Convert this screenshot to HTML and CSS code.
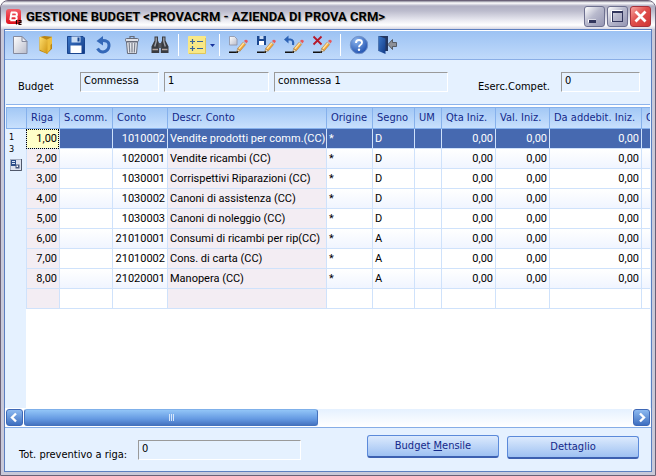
FILE: index.html
```html
<!DOCTYPE html>
<html lang="it">
<head>
<meta charset="utf-8">
<title>Gestione Budget</title>
<link rel="stylesheet" href="styles.css">
</head>
<body>
<main class="window">
  <header class="titlebar">
    <svg class="logo" viewBox="0 0 16 16" aria-hidden="true">
      <defs><linearGradient id="gRed" x1="0" y1="0" x2="0" y2="1"><stop offset="0" stop-color="#f4606a"/><stop offset="1" stop-color="#e0101c"/></linearGradient></defs>
      <rect width="15" height="15" rx="3" fill="url(#gRed)"/>
      <path d="M5 3.500h4a1.900 1.900 0 0 1 0 3.800h-4.500M4.300 11.200h4.200a1.950 1.950 0 0 0 .5-3.900M5.500 3.500L4.300 11.200" fill="none" stroke="#fff" stroke-width="2"/>
      <path d="M10.500 11v4.500M12.500 11.500h2.500v1.800h-2v2h2.500" fill="none" stroke="#200" stroke-width="1.200"/>
    </svg>
    <h1>GESTIONE BUDGET &lt;PROVACRM - AZIENDA DI PROVA CRM&gt;</h1>
    <div class="winbuttons">
      <button type="button" class="win" aria-label="Riduci a icona"><svg viewBox="0 0 19 19"><path d="M3 12.500h8v3H3z" fill="#fff"/><path d="M4 13h7v3H4z" fill="#32365c"/></svg></button>
      <button type="button" class="win" aria-label="Ingrandisci"><svg viewBox="0 0 19 19"><path d="M3.500 15V3.500H14" stroke="#fff" fill="none"/><rect x="4.500" y="4.500" width="10" height="10" fill="none" stroke="#32365c"/><path d="M4 5h11" stroke="#32365c" stroke-width="2"/></svg></button>
      <button type="button" class="win close" aria-label="Chiudi"><svg viewBox="0 0 19 19"><path d="M4.500 4.500l10 10M14.500 4.500l-10 10" stroke="#fff" stroke-width="2.800"/></svg></button>
    </div>
  </header>

  <section class="client">
    <nav class="toolbar" aria-label="Comandi">
      <svg class="defs" aria-hidden="true">
        <defs>
          <linearGradient id="gPage" x1="0" y1="0" x2="1" y2="1"><stop offset="0" stop-color="#fff"/><stop offset="1" stop-color="#b9bccb"/></linearGradient>
          <linearGradient id="gBlue" x1="0" y1="0" x2="1" y2="1"><stop offset="0" stop-color="#3c78c8"/><stop offset="1" stop-color="#123a86"/></linearGradient>
          <linearGradient id="gGold" x1="0" y1="0" x2="1" y2="1"><stop offset="0" stop-color="#ffe070"/><stop offset="1" stop-color="#cf9410"/></linearGradient>
          <radialGradient id="gHelp" cx=".35" cy=".25" r=".8"><stop offset="0" stop-color="#8db6ee"/><stop offset="1" stop-color="#1d4fae"/></radialGradient>
          <g id="pencil">
            <path d="M1 17.300h9" stroke="#111" stroke-width="1.400"/>
            <path d="M8.500 17.500l1.200-4 2.600 2.200z" fill="#f6dcae" stroke="#6b4a1a" stroke-width=".4"/>
            <path d="M8.500 17.500l.6-1.700 1.200 1z" fill="#111"/>
            <path d="M9.700 13.500l5.300-6.200 2.700 2.200-5.300 6.200z" fill="#f5a83a" stroke="#96601c" stroke-width=".4"/>
            <path d="M10.900 13.700l5-5.800" stroke="#ffe2a0" stroke-width="1.400"/>
            <path d="M15 7.300l1-1.200 2.700 2.200-1 1.200z" fill="#b9bcc6"/>
            <path d="M16 6.100l1-1.200q2-.7 2.900 1.300l-1.200 2.100z" fill="#e8595d"/>
          </g>
        </defs>
      </svg>
      <button type="button" class="tool" aria-label="Nuovo"><svg viewBox="0 0 20 20"><path d="M3.500 1.500h8.500l5 5v12h-13.500z" fill="url(#gPage)" stroke="#858a9e"/><path d="M12 1.500v5h5z" fill="#e9ebf3" stroke="#858a9e"/></svg></button>
      <button type="button" class="tool" aria-label="Apri"><svg viewBox="0 0 20 20"><path d="M1.500 2l5-1 7.500.8v12l-5 5-7.500-3z" fill="#b98410"/><path d="M9 4.500l5-2.500v6.500l-1.500 1.500v4l-3.500 4.500z" fill="#eebf3d"/><path d="M1.500 1.500l8 3.500v14l-8-4.500z" fill="url(#gGold)"/></svg></button>
      <button type="button" class="tool" aria-label="Salva"><svg viewBox="0 0 20 20"><path d="M1.500 1.500h15.500l1.500 1.500v15.500h-17z" fill="url(#gBlue)" stroke="#1a458f"/><path d="M5.500 1.500h9v6h-9z" fill="#c9dcf4"/><path d="M11.500 2.500h2v4h-2z" fill="#17458f"/><path d="M4.500 10.500h11v7.500h-11z" fill="#fff"/></svg></button>
      <button type="button" class="tool" aria-label="Annulla"><svg viewBox="0 0 20 20"><path d="M7.500 5.500q8-.5 7.500 5.500-.7 5.500-6 6-3.500 0-5.500-3.500" fill="none" stroke="#3468b8" stroke-width="3"/><path d="M2.500 6l6.500-5v9.500z" fill="#3468b8"/></svg></button>
      <button type="button" class="tool" aria-label="Elimina"><svg viewBox="0 0 20 20"><path d="M8 3.500v-2h4v2" fill="none" stroke="#666b79" stroke-width="1.200"/><rect x="3.500" y="3.500" width="13" height="3" rx="1" fill="#dfe1e8" stroke="#666b79"/><path d="M4.500 7h11l-1 11.500h-9z" fill="#e5e7ec" stroke="#666b79"/><path d="M7.200 8l.5 9.500M10 8v9.500M12.800 8l-.5 9.500" stroke="#7b808d" stroke-width="1.200"/></svg></button>
      <button type="button" class="tool" aria-label="Cerca"><svg viewBox="0 0 20 20"><path d="M4.500 1.500h3.500v4l1.200 3v9.500h-7.700v-6.500l3-6zM12 1.500h3.500v4l3 6v6.500h-7.700v-9.500l1.200-3z" fill="#393b40"/><path d="M8.500 8h3v5h-3z" fill="#55575d"/><path d="M6.200 2.500v4l-1.500 5M13.800 2.500v4l1.500 5" stroke="#9da0a8" stroke-width="1.400" fill="none"/><path d="M2.500 14.500h5.500M12 14.500h5.500" stroke="#b5a39b" stroke-width="1.400"/></svg></button>
      <span class="sep"></span>
      <button type="button" class="tool drop" aria-label="Operazioni"><svg viewBox="0 0 20 20"><rect x="1" y="1" width="18" height="18" rx="1" fill="#f8e886"/><path d="M2 18.500h16.500V3" fill="none" stroke="#e0c65a"/><path d="M3 6.500h5M5.500 4v5M3 13.500h5M5.500 11v5M10 6.500h6M10 13.500h6" stroke="#38659c" stroke-width="1.200"/></svg><svg class="caret" viewBox="0 0 5 3"><path d="M0 0h5l-2.500 3z" fill="#16329c"/></svg></button>
      <span class="sep"></span>
      <button type="button" class="tool" aria-label="Nuova riga"><svg viewBox="0 0 20 20"><path d="M1.500 1.500h5l2.500 2.500v6h-7.500z" fill="url(#gPage)" stroke="#8b90a3" stroke-width=".8"/><use href="#pencil"/></svg></button>
      <button type="button" class="tool" aria-label="Salva riga"><svg viewBox="0 0 20 20"><path d="M1 1h9v9h-9z" fill="#1c4890"/><path d="M3.500 1h4v3h-4z" fill="#c9dcf4"/><path d="M3 6h5v4h-5z" fill="#fff"/><use href="#pencil"/></svg></button>
      <button type="button" class="tool" aria-label="Annulla riga"><svg viewBox="0 0 20 20"><path d="M4 4.500h2.500q3.500.5 2.500 5.500" fill="none" stroke="#2d63b5" stroke-width="2.200"/><path d="M0 4.500l4.500-4v8z" fill="#2d63b5"/><use href="#pencil"/></svg></button>
      <button type="button" class="tool" aria-label="Elimina riga"><svg viewBox="0 0 20 20"><path d="M1.500 1.500l8 8M9.500 1.500l-8 8" stroke="#b5182a" stroke-width="1.800"/><use href="#pencil"/></svg></button>
      <span class="sep"></span>
      <button type="button" class="tool" aria-label="Aiuto"><svg viewBox="0 0 20 20"><circle cx="10" cy="10" r="8.700" fill="url(#gHelp)" stroke="#7392c8"/><path d="M7 8q0-3 3-3t3 2.500q0 1.500-1.700 2.500-1.300.8-1.300 2.300" fill="none" stroke="#fff" stroke-width="1.900"/><circle cx="10" cy="14.700" r="1.200" fill="#fff"/></svg></button>
      <button type="button" class="tool" aria-label="Esci"><svg viewBox="0 0 20 20"><path d="M1.500 1h9.500v15h-9.500z" fill="#23365f"/><path d="M1.500 1l7 2.500v15.500l-7-3z" fill="url(#gBlue)"/><path d="M19.500 7.500h-4v-3l-4.500 5 4.500 5v-3h4z" fill="#8d9097" stroke="#44474e" stroke-width=".8"/></svg></button>
    </nav>

    <form class="head">
      <label for="bud">Budget</label>
      <input id="bud" class="f1" value="Commessa">
      <input class="f2" value="1" aria-label="Codice">
      <input class="f3" value="commessa 1" aria-label="Descrizione">
      <label for="ese" class="ese">Eserc.Compet.</label>
      <input id="ese" class="f4" value="0">
    </form>

    <div class="gridbox">
      <aside class="gutter">
        <div class="corner"></div>
        <span>1</span><span>3</span>
        <svg viewBox="0 0 12 12" aria-hidden="true"><rect x=".5" y=".5" width="11" height="11" fill="#dde2ee" stroke="#a5aec0"/><path d="M1 1h5v6h-5z" fill="#2c4e88"/><path d="M2 2.500h3M2 4.500h3" stroke="#dbe6f7"/><path d="M5.500 5.500h4v4h-4z" fill="#48597d"/><path d="M6.500 6.500h1.500v1.500h-1.500z" fill="#fff"/><path d="M11.500 0v11.500H0" fill="none" stroke="#50586b"/></svg>
      </aside>
      <div class="scroller">
        <table>
          <colgroup><col class="c1"><col class="c2"><col class="c3"><col class="c4"><col class="c5"><col class="c6"><col class="c7"><col class="c8"><col class="c8"><col class="c10"><col class="c11"></colgroup>
          <thead><tr><th>Riga</th><th>S.comm.</th><th>Conto</th><th>Descr. Conto</th><th>Origine</th><th>Segno</th><th>UM</th><th>Qta Iniz.</th><th>Val. Iniz.</th><th>Da addebit. Iniz.</th><th>Q</th></tr></thead>
          <tbody>
            <tr class="sel"><td>1,00</td><td></td><td>1010002</td><td>Vendite prodotti per comm.(CC)</td><td>*</td><td>D</td><td></td><td>0,00</td><td>0,00</td><td>0,00</td><td></td></tr>
            <tr><td>2,00</td><td></td><td>1020001</td><td>Vendite ricambi (CC)</td><td>*</td><td>D</td><td></td><td>0,00</td><td>0,00</td><td>0,00</td><td></td></tr>
            <tr><td>3,00</td><td></td><td>1030001</td><td>Corrispettivi Riparazioni (CC)</td><td>*</td><td>D</td><td></td><td>0,00</td><td>0,00</td><td>0,00</td><td></td></tr>
            <tr><td>4,00</td><td></td><td>1030002</td><td>Canoni di assistenza (CC)</td><td>*</td><td>D</td><td></td><td>0,00</td><td>0,00</td><td>0,00</td><td></td></tr>
            <tr><td>5,00</td><td></td><td>1030003</td><td>Canoni di noleggio (CC)</td><td>*</td><td>D</td><td></td><td>0,00</td><td>0,00</td><td>0,00</td><td></td></tr>
            <tr><td>6,00</td><td></td><td>21010001</td><td>Consumi di ricambi per rip(CC)</td><td>*</td><td>A</td><td></td><td>0,00</td><td>0,00</td><td>0,00</td><td></td></tr>
            <tr><td>7,00</td><td></td><td>21010002</td><td>Cons. di carta (CC)</td><td>*</td><td>A</td><td></td><td>0,00</td><td>0,00</td><td>0,00</td><td></td></tr>
            <tr><td>8,00</td><td></td><td>21020001</td><td>Manopera (CC)</td><td>*</td><td>A</td><td></td><td>0,00</td><td>0,00</td><td>0,00</td><td></td></tr>
            <tr><td></td><td></td><td></td><td></td><td></td><td></td><td></td><td></td><td></td><td></td><td></td></tr>
          </tbody>
        </table>
      </div>
    </div>

    <div class="hscroll">
      <button type="button" aria-label="Scorri a sinistra"><svg viewBox="0 0 15 15"><path d="M9 3.500l-4 4 4 4" fill="none" stroke="#fff" stroke-width="2.400"/></svg></button>
      <div class="track"><div class="thumb"><i></i><i></i><i></i></div></div>
      <button type="button" aria-label="Scorri a destra"><svg viewBox="0 0 15 15"><path d="M6 3.500l4 4-4 4" fill="none" stroke="#fff" stroke-width="2.400"/></svg></button>
    </div>

    <footer class="foot">
      <label for="tot">Tot. preventivo a riga:</label>
      <input id="tot" value="0">
      <div class="actions">
        <button type="button">Budget <u>M</u>ensile</button>
        <button type="button">Dettaglio</button>
      </div>
    </footer>
  </section>
</main>
</body>
</html>
```
FILE: styles.css
```css
* { box-sizing: border-box; }
html, body { height: 100%; margin: 0; }
body { background: #fff; font: 11px/14px "DejaVu Sans Condensed", "Noto Sans", sans-serif; color: #000; }
button, input { font: inherit; color: inherit; margin: 0; }
svg { display: block; }

.window {
  display: flex; flex-direction: column; height: 100vh; padding: 0 3px 3px;
  background: #c9c9d9; border: 1px solid #6a6177; border-radius: 8px 8px 0 0; overflow: hidden;
}
.titlebar {
  display: flex; align-items: center; gap: 4px; height: 28px; flex: none;
  margin: 0 -3px; padding: 3px 4px 0 5px;
  background: linear-gradient(#8a8798 0, #fff 2px, #b0afc3 5px, #bcbccd 10px, #e8e8f0 19px, #fff 24px, #d5d5e2 28px);
}
.logo { width: 16px; height: 16px; }
h1 { flex: 1; margin: 0; font: bold 13px/18px Roboto, sans-serif; white-space: nowrap; text-shadow: 1px 1px 1px #aaa; }
.winbuttons { display: flex; gap: 2px; }
.win { width: 21px; height: 21px; padding: 0; border: 1px solid #6e708f; border-radius: 3px; background: linear-gradient(135deg, #fff, #b9bacd 45%, #9596b3); }
.win svg { width: 19px; height: 19px; }
.close { border-color: #a5323c; background: linear-gradient(135deg, #f6a49f, #e0504d 45%, #cf3535); }

.client { flex: 1; min-height: 0; display: flex; flex-direction: column; border: 1px solid #5c7fc0; background: #e5f1ff; }
.toolbar { display: flex; align-items: center; height: 30px; flex: none; padding: 0 5px; border-top: 1px solid #fff; border-bottom: 1px solid #8aaee6; background: linear-gradient(#9cc2f3, #c0dafb); }
.defs { position: absolute; width: 0; height: 0; }
.tool { width: 28px; height: 24px; padding: 0; border: 0; background: none; display: flex; align-items: center; }
.tool > svg:first-child { width: 20px; height: 20px; flex: none; }
.drop { width: 32px; gap: 3px; }
.tool > .caret { width: 5px; height: 3px; }
.sep { width: 1px; height: 22px; margin: 0 8px 0 0; background: #fff; }

.head { display: flex; align-items: flex-start; height: 44px; flex: none; padding: 12px 11px 0 13px; }
label { padding-top: 8px; white-space: nowrap; }
input { height: 20px; padding: 0 3px 3px; border: 1px solid; border-color: #9a9a9a #fff #fff #9a9a9a; background: transparent; min-width: 0; border-radius: 0; }
.head label:first-child { width: 62px; }
.f1 { width: 79px; } .f2 { width: 105px; margin-left: 5px; } .f3 { width: 174px; margin-left: 5px; }
.ese { margin-left: auto; padding-right: 11px; } .f4 { width: 79px; }

.gridbox { flex: 1; min-height: 0; display: flex; margin: 0 1px; border-top: 1px solid #8db4ec; padding-top: 2px; background: #fff; }
.gutter { width: 20px; flex: none; display: flex; flex-direction: column; background: #e5f1ff; font-size: 9px; line-height: 12px; }
.gutter span { padding-left: 3px; }
.gutter svg { width: 12px; height: 12px; margin: 4px 0 0 4px; }
.corner, th { height: 22px; border: 1px solid #86b1ec; border-width: 1px 0 1px 1px; background: linear-gradient(#a3c8f5, #c8e0fd); }
.corner { margin-bottom: 2px; flex: none; }
.scroller { flex: 1; overflow: hidden; }
table { border-collapse: separate; border-spacing: 0; table-layout: fixed; width: 100%; }
.c1 { width: 33px; } .c2 { width: 53px; } .c3 { width: 55px; } .c4 { width: 159px; } .c5 { width: 46px; } .c6 { width: 42px; }
.c7 { width: 27px; } .c8 { width: 54px; } .c10 { width: 92px; }
th { padding: 0 0 0 4px; font-weight: normal; text-align: left; color: #13298a; white-space: nowrap; overflow: hidden; }
tbody { font-family: Roboto, "Liberation Sans", sans-serif; }
td { height: 20px; padding: 0 2px; white-space: nowrap; overflow: hidden; border: solid #cfe2fb; border-width: 0 0 1px 1px; }
td:nth-child(1), td:nth-child(3), td:nth-child(n+8) { text-align: right; }
tbody tr:nth-child(even) td { background: linear-gradient(#fff, #f0f5ff); }
tbody tr td:nth-child(1), tbody tr td:nth-child(4), tbody tr:nth-child(even) td:nth-child(1), tbody tr:nth-child(even) td:nth-child(4) { background: #f3edf3; }
tbody .sel td, tbody .sel td:nth-child(4) { background: #4669b0; color: #fff; }
tbody .sel td:nth-child(1) { background: #ffffc9; color: #000; outline: 1px dotted #000; outline-offset: -1px; }

.hscroll { display: flex; gap: 1px; height: 20px; flex: none; padding: 1px; border-bottom: 1px solid #86ade6; background: #fff; }
.hscroll button { width: 17px; height: 17px; padding: 0; border: 1px solid #3e68b6; border-radius: 3px; background: linear-gradient(#8dbaf1, #3e6fc0); flex: none; }
.hscroll button svg { width: 15px; height: 15px; }
.track { flex: 1; background: linear-gradient(#e5f1ff, #fff); }
.thumb { width: 48.4%; height: 17px; display: flex; align-items: center; justify-content: center; gap: 1px; border: 1px solid #4472bd; border-top-color: #7fb0ea; border-radius: 3px; background: linear-gradient(#92c5f7, #6499e2 60%, #4573c0); }
.thumb i { width: 1px; height: 7px; background: #d5e6fb; }

.foot { display: flex; align-items: flex-start; height: 43px; flex: none; padding: 12px 12px 0 14px; }
.foot label { width: 119px; }
.foot input { width: 163px; }
.actions { display: flex; gap: 8px; margin: -5px 0 0 auto; }
.actions button { width: 132px; height: 23px; padding: 0; border: 1px solid #5b8ada; border-bottom: 2px solid #3c60b0; border-radius: 3px; color: #13298a; background: linear-gradient(#dceafd, #9ec1f2); }
.actions button:last-child { margin-top: 1px; }
```
